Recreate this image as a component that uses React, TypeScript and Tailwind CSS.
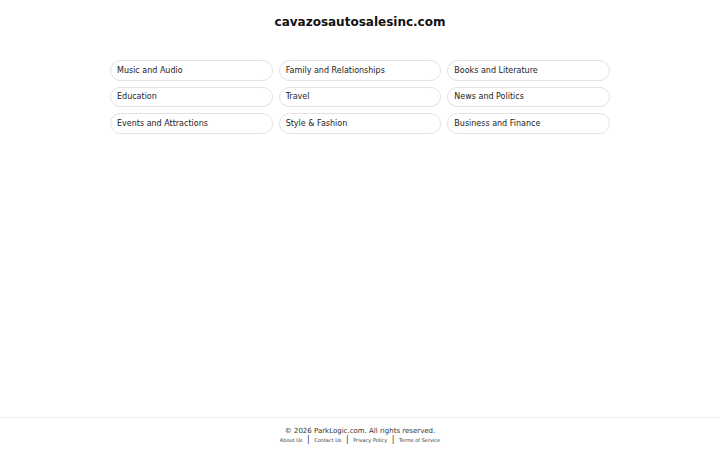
const categories = [
  'Music and Audio',
  'Family and Relationships',
  'Books and Literature',
  'Education',
  'Travel',
  'News and Politics',
  'Events and Attractions',
  'Style & Fashion',
  'Business and Finance',
]

const links = ['About Us', 'Contact Us', 'Privacy Policy', 'Terms of Service']

export default function App() {
  return (
    <div
      className="flex flex-col min-h-[450px] bg-white text-[#1a1a1a]"
      style={{ fontFamily: '"DejaVu Sans", sans-serif' }}
    >
      <main className="flex-1 flex flex-col items-center">
        <h1 className="mt-[14px] text-[12px] font-bold leading-[17px] text-[#111]">
          cavazosautosalesinc.com
        </h1>
        <div className="mt-[29px] grid grid-cols-3 gap-x-[6px] gap-y-[6px] w-[500px]">
          {categories.map((c) => (
            <a
              key={c}
              href="#"
              className="flex items-center h-[20.5px] pt-[1px] px-[6px] rounded-full border border-[#e2e2e2] text-[8px] text-[#222]"
            >
              {c}
            </a>
          ))}
        </div>
      </main>
      <footer className="border-t border-[#efefef] pt-[8px] pb-[6px] flex flex-col items-center">
        <p className="text-[7px] leading-[10px] text-[#333]">© 2026 ParkLogic.com. All rights reserved.</p>
        <div className="flex items-center text-[5px] leading-[8px] text-[#333]">
          {links.map((l, i) => (
            <span key={l} className="flex items-center">
              {i > 0 && <span className="mx-[4.5px] text-[8px]">|</span>}
              <a href="#">{l}</a>
            </span>
          ))}
        </div>
      </footer>
    </div>
  )
}
